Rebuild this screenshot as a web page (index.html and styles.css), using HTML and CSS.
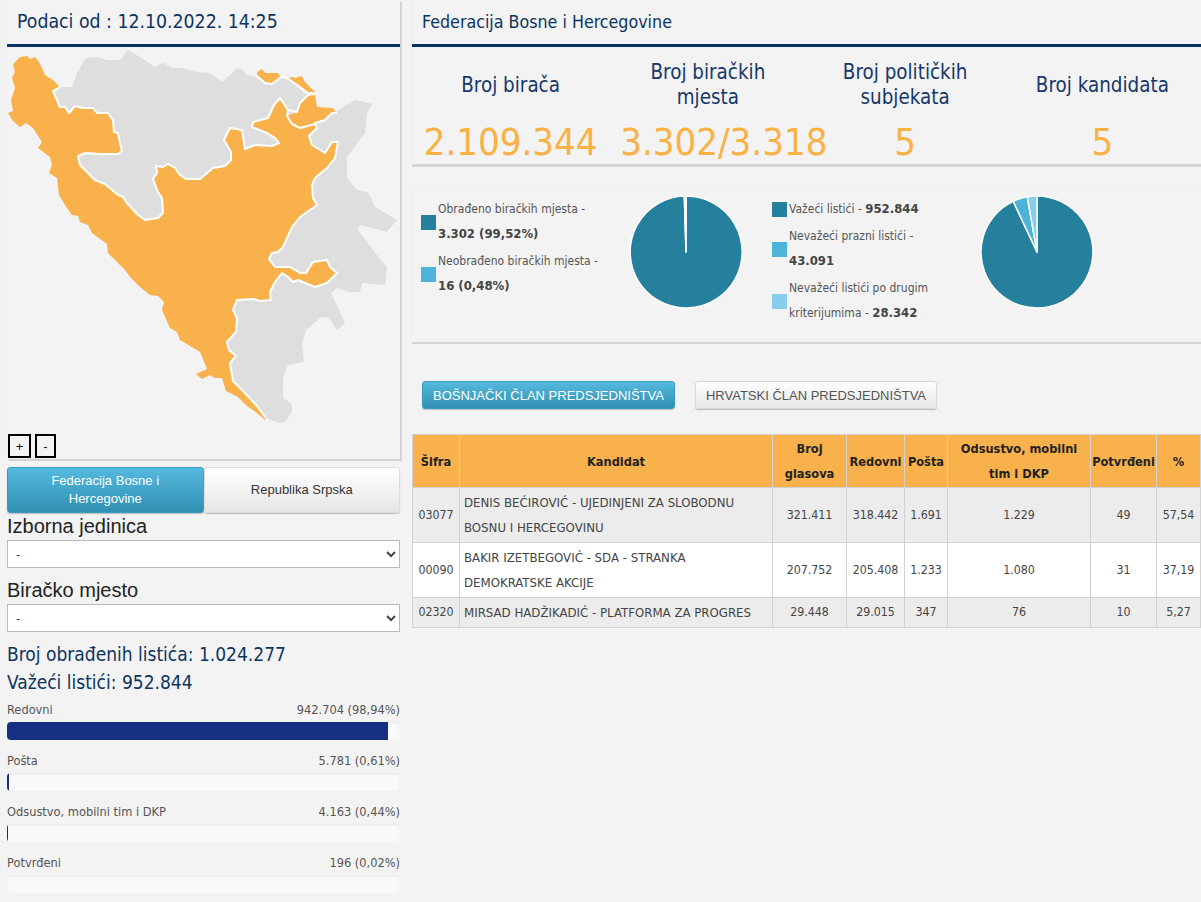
FILE: index.html
```html
<!DOCTYPE html>
<html lang="bs">
<head>
<meta charset="utf-8">
<title>Izbori</title>
<link rel="stylesheet" href="styles.css">
</head>
<body>
<div class="page">
  <aside class="left">
    <section class="panel map-panel">
      <h2 class="panel-head head-lg">Podaci od : 12.10.2022. 14:25</h2>
      <svg class="map" viewBox="7 47 393 387" width="393" height="387" aria-label="Mapa">
        <path class="land" d="M60 87L72 87 77 73 86 58 98 57 107 60 120 60 128 50 140 57 155 67 163 63 173 68 182 68 197 72 210 73 222 82 230 75 237 68 243 70 247 75 257 77 265 85 272 84 281 77 287 78 307 95 317 107 335 112 355 100 372 104 367 113 365 133 347 157 347 178 357 190 368 192 375 207 397 220 387 232 360 225 358 230 373 250 387 267 385 285 362 283 360 292 348 292 337 288 331 293 345 323 337 330 328 317 320 318 306 330 302 345 304 362 288 365 283 377 283 397 292 405 292 412 285 422 278 423 265 417 258 411 245 398 228 380 200 340 120 230 65 170 45 130 45 100Z"/>
        <path class="fed" d="M14 63L20 57 27 56 30 59 35 57 39 62 42 68 45 75 53 80 60 87 53 91 60 107 65 107 69 113 75 106 83 108 93 108 97 113 108 113 113 120 114 132 118 133 120 143 122 151 118 154 100 154 85 153 78 156 80 165 88 173 95 180 105 184 118 195 123 197 127 203 138 215 145 220 158 218 163 213 162 198 158 192 153 179 157 173 156 166 163 167 168 164 175 168 180 175 186 179 200 179 213 168 225 166 231 160 231 152 224 140 230 128 242 130 245 149 255 145 272 146 279 143 275 138 267 133 252 127 253 122 268 118 274 105 280 98 288 110 287 116 292 124 300 128 315 124 317 128 309 136 312 145 325 153 332 142 338 142 335 158 327 168 315 178 312 185 313 198 317 205 300 217 292 227 283 247 278 252 272 253 269 259 275 267 290 267 300 273 306 273 313 262 327 260 330 267 337 273 327 283 315 287 305 283 298 280 293 282 288 277 282 273 275 282 270 292 271 300 260 301 253 299 237 300 233 310 237 318 236 332 227 342 229 350 236 356 230 363 233 381 244 392 257 406 265 417 265 420 257 413 247 406 238 397 226 391 222 378 215 378 210 375 202 379 196 374 207 369 200 352 180 340 177 332 170 328 162 310 164 302 158 296 150 295 140 287 130 277 125 270 115 260 108 253 107 244 92 233 88 225 80 222 78 216 72 215 65 205 59 195 57 178 49 173 52 165 50 157 38 148 42 142 33 128 26 123 20 127 13 121 8 113 13 111 11 100 15 88 12 78 15 72 13 65Z"/>
        <path class="fed" d="M257 72L262 69 265 73 278 73 281 77 272 84 265 82 257 76Z"/>
        <path class="fed" d="M288 78L292 77 295 78 302 76 305 82 315 92 308 93 300 87Z"/>
        <path class="fed" d="M307 96L315 95 317 107 333 108 336 113 332 113 325 120 315 123 300 128 292 124 287 116 297 112 300 103Z"/>
        <polyline class="edge" points="60 87 53 91 60 107 65 107 69 113 75 106 83 108 93 108 97 113 108 113 113 120 114 132 118 133 120 143 122 151 118 154 100 154 85 153 78 156 80 165 88 173 95 180 105 184 118 195 123 197 127 203 138 215 145 220 158 218 163 213 162 198 158 192 153 179 157 173 156 166 163 167 168 164 175 168 180 175 186 179 200 179 213 168 225 166 231 160 231 152 224 140 230 128 242 130 245 149 255 145 272 146 279 143 275 138 267 133 252 127 253 122 268 118 274 105 280 98 288 110 287 116 292 124 300 128 315 124 317 128 309 136 312 145 325 153 332 142 338 142 335 158 327 168 315 178 312 185 313 198 317 205 300 217 292 227 283 247 278 252 272 253 269 259 275 267 290 267 300 273 306 273 313 262 327 260 330 267 337 273 327 283 315 287 305 283 298 280 293 282 288 277 282 273 275 282 270 292 271 300 260 301 253 299 237 300 233 310 237 318 236 332 227 342 229 350 236 356 230 363 233 381 244 392 257 406 265 417"/>
        <polyline class="edge" points="257 76 265 83 272 84 281 77 287 78 300 87 308 93 314 94"/>
        <polyline class="edge" points="288 110 297 112 300 103 307 96 311 93"/>
        <polyline class="edge" points="315 123 325 120 332 113 336 113"/>
      </svg>
      <div class="zoom-row">
        <button class="zoom-btn zoom-plus" type="button">+</button>
        <button class="zoom-btn zoom-minus" type="button">-</button>
      </div>
    </section>

    <div class="entity-tabs">
      <button class="entity active" type="button">Federacija Bosne i Hercegovine</button>
      <button class="entity" type="button">Republika Srpska</button>
    </div>

    <label class="field-label">Izborna jedinica</label>
    <select class="field"><option>-</option></select>
    <label class="field-label second">Biračko mjesto</label>
    <select class="field"><option>-</option></select>

    <p class="total first">Broj obrađenih listića: 1.024.277</p>
    <p class="total">Važeći listići: 952.844</p>

    <div class="bar-row"><span>Redovni</span><span>942.704 (98,94%)</span></div>
    <div class="track"><div class="fill" style="width:381px"></div></div>
    <div class="bar-row"><span>Pošta</span><span>5.781 (0,61%)</span></div>
    <div class="track"><div class="fill" style="width:2px"></div></div>
    <div class="bar-row"><span>Odsustvo, mobilni tim i DKP</span><span>4.163 (0,44%)</span></div>
    <div class="track"><div class="fill" style="width:1px"></div></div>
    <div class="bar-row"><span>Potvrđeni</span><span>196 (0,02%)</span></div>
    <div class="track"><div class="fill" style="width:0"></div></div>
  </aside>

  <main class="right">
    <section class="panel stats-panel">
      <h2 class="panel-head head-sm">Federacija Bosne i Hercegovine</h2>
      <div class="stats">
        <div class="stat"><div class="stat-title">Broj birača</div><div class="stat-value">2.109.344</div></div>
        <div class="stat"><div class="stat-title">Broj biračkih<br>mjesta</div><div class="stat-value">3.302/3.318</div></div>
        <div class="stat"><div class="stat-title">Broj političkih<br>subjekata</div><div class="stat-value">5</div></div>
        <div class="stat"><div class="stat-title">Broj kandidata</div><div class="stat-value">5</div></div>
      </div>
    </section>

    <section class="panel charts">
      <div class="chart">
        <ul class="legend">
          <li><i class="sw c1"></i><span>Obrađeno biračkih mjesta -<br><b>3.302 (99,52%)</b></span></li>
          <li><i class="sw c2"></i><span>Neobrađeno biračkih mjesta -<br><b>16 (0,48%)</b></span></li>
        </ul>
        <svg class="pie" viewBox="0 0 116 116" width="116" height="116">
          <path class="s1" d="M58 58L58 2A56 56 0 1 1 56.31 2.03Z"/>
          <path class="s2" d="M58 58L56.31 2.03A56 56 0 0 1 58 2Z"/>
        </svg>
      </div>
      <div class="chart">
        <ul class="legend">
          <li><i class="sw c1"></i><span>Važeći listići - <b>952.844</b></span></li>
          <li><i class="sw c2"></i><span>Nevažeći prazni listići -<br><b>43.091</b></span></li>
          <li><i class="sw c3"></i><span>Nevažeći listići po drugim<br>kriterijumima - <b>28.342</b></span></li>
        </ul>
        <svg class="pie" viewBox="0 0 116 116" width="116" height="116">
          <path class="s1" d="M58 58L58 2A56 56 0 1 1 34.24 7.29Z"/>
          <path class="s2" d="M58 58L34.24 7.29A56 56 0 0 1 48.31 2.85Z"/>
          <path class="s3" d="M58 58L48.31 2.85A56 56 0 0 1 58 2Z"/>
        </svg>
      </div>
    </section>

    <div class="race-tabs">
      <button class="race active" type="button">BOŠNJAČKI ČLAN PREDSJEDNIŠTVA</button>
      <button class="race" type="button">HRVATSKI ČLAN PREDSJEDNIŠTVA</button>
    </div>

    <table class="results">
      <colgroup>
        <col class="w1"><col class="w2"><col class="w3"><col class="w4"><col class="w5"><col class="w6"><col class="w7"><col class="w8">
      </colgroup>
      <thead>
        <tr><th>Šifra</th><th>Kandidat</th><th>Broj<br>glasova</th><th>Redovni</th><th>Pošta</th><th>Odsustvo, mobilni<br>tim i DKP</th><th>Potvrđeni</th><th>%</th></tr>
      </thead>
      <tbody>
        <tr class="odd"><td>03077</td><td class="name">DENIS BEĆIROVIĆ - UJEDINJENI ZA SLOBODNU<br>BOSNU I HERCEGOVINU</td><td>321.411</td><td>318.442</td><td>1.691</td><td>1.229</td><td>49</td><td>57,54</td></tr>
        <tr><td>00090</td><td class="name">BAKIR IZETBEGOVIĆ - SDA - STRANKA<br>DEMOKRATSKE AKCIJE</td><td>207.752</td><td>205.408</td><td>1.233</td><td>1.080</td><td>31</td><td>37,19</td></tr>
        <tr class="odd"><td>02320</td><td class="name">MIRSAD HADŽIKADIĆ - PLATFORMA ZA PROGRES</td><td>29.448</td><td>29.015</td><td>347</td><td>76</td><td>10</td><td>5,27</td></tr>
      </tbody>
    </table>
  </main>
</div>
</body>
</html>
```

FILE: styles.css
```css
* { box-sizing: border-box; }
html, body { margin: 0; padding: 0; }
body {
  background: #f3f3f3;
  color: #444;
  font-family: "DejaVu Sans Condensed", "DejaVu Sans", sans-serif;
  font-stretch: condensed;
  overflow: hidden;
}
.page {
  display: grid;
  grid-template-columns: 393px 789px;
  column-gap: 12px;
  padding-left: 7px;
  height: 902px;
  overflow: hidden;
}
.panel {
  background: #f3f3f3;
  box-shadow: 0 0 1px #ddd;
}
.panel-head {
  margin: 0;
  height: 47px;
  border-bottom: 3px solid #0b3361;
  color: #0d3361;
  font-weight: 400;
}
.head-lg { font-size: 19.3px; line-height: 44px; padding-left: 10px; }
.head-sm { font-size: 17.7px; line-height: 44px; padding-left: 10px; }

.map-panel { height: 459px; box-shadow: 2px 2px 0 #d4d4d4, 0 0 1px #ddd; }
.map { display: block; }
.land { fill: #dedede; }
.fed { fill: #f9b14b; }
.edge { fill: none; stroke: #fff; stroke-width: 2; stroke-linejoin: round; stroke-linecap: round; }
.zoom-row { display: flex; gap: 4px; padding-left: 1px; }
.zoom-btn {
  height: 24px;
  padding: 0;
  background: #f3f3f3;
  border: 2px solid #000;
  border-radius: 0;
  color: #111;
  font: 13px "Liberation Sans", sans-serif;
}
.zoom-plus { width: 23px; }
.zoom-minus { width: 21px; }

.entity-tabs { display: flex; margin-top: 8px; height: 46px; }
.entity {
  flex: 1;
  padding: 0 20px;
  border: 1px solid #dcdcdc;
  border-radius: 3px;
  background: linear-gradient(#fff, #e6e6e6);
  color: #333;
  font: 13px/18px "Liberation Sans", sans-serif;
  box-shadow: 0 1px 1px #bbb;
}
.entity.active {
  background: linear-gradient(#55bade, #3090b2);
  border-color: #3a9dbf;
  color: #fff;
}
.field-label {
  display: block;
  color: #222;
  font: 20px/27px "Liberation Sans", sans-serif;
}
.field-label.second { margin-top: 8px; line-height: 28px; }
.field {
  display: block;
  width: 393px;
  height: 28px;
  background: #fff;
  border: 1px solid #bbb;
  color: #444;
  font: 13px "Liberation Sans", sans-serif;
  padding: 0 4px;
}
.total {
  margin: 0;
  color: #0d3361;
  font-size: 19px;
  line-height: 28px;
}
.total.first { margin-top: 8px; }
.bar-row {
  display: flex;
  justify-content: space-between;
  height: 26px;
  padding-top: 1px;
  color: #555;
  font-size: 12.7px;
  line-height: 26px;
}
.track {
  height: 18px;
  margin-bottom: 7px;
  background: #f9f9f9;
  border-radius: 4px;
  box-shadow: inset 0 1px 2px #e6e6e6;
  overflow: hidden;
}
.fill { height: 100%; background: #162f82; }

.stats-panel { height: 164px; box-shadow: 0 3px 0 #d4d4d4, 0 0 1px #ddd; }
.stats { display: grid; grid-template-columns: repeat(4, minmax(0, 1fr)); }
.stat { min-width: 0; padding: 0 11px; text-align: center; }
.stat-title {
  display: flex;
  align-items: center;
  justify-content: center;
  height: 50px;
  margin-top: 13px;
  color: #16386a;
  font-size: 20.4px;
  line-height: 25px;
  text-align: center;
}
.stat-value {
  padding-top: 5px;
  color: #fbb144;
  font-size: 38px;
  line-height: 54px;
  white-space: nowrap;
}

.charts {
  display: flex;
  height: 156px;
  margin-top: 22px;
  padding-top: 8px;
  box-shadow: 0 2px 0 #d4d4d4, 0 0 1px #ddd;
}
.chart { display: flex; width: 351px; padding-left: 9px; }
.legend {
  width: 207px;
  margin: 3px 0 0;
  padding: 0;
  list-style: none;
  color: #555;
  font-size: 12px;
  line-height: 25px;
}
.legend li { display: flex; align-items: center; gap: 2px; margin-bottom: 2px; }
.legend b { color: #444; font-size: 13px; line-height: 1; }
.sw { width: 15px; height: 15px; flex: none; }
.c1 { background: #25809e; }
.c2 { background: #4cb4d8; }
.c3 { background: #87cdec; }
.pie { display: block; flex: none; }
.s1, .s2, .s3 { stroke: #fff; stroke-width: 1.5; stroke-linejoin: round; }
.s1 { fill: #25809e; }
.s2 { fill: #4cb4d8; }
.s3 { fill: #87cdec; }

.race-tabs { display: flex; gap: 20px; margin-top: 39px; padding-left: 10px; }
.race {
  height: 28px;
  padding: 0 10px;
  border: 1px solid #d8d8d8;
  border-radius: 3px;
  background: linear-gradient(#fff, #e6e6e6);
  color: #555;
  font: 13px "Liberation Sans", sans-serif;
  box-shadow: 0 1px 1px #bbb;
  white-space: nowrap;
}
.race.active {
  background: linear-gradient(#55bade, #3090b2);
  border-color: #3a9dbf;
  color: #fff;
}

.results {
  width: 788px;
  margin-top: 25px;
  table-layout: fixed;
  border-collapse: collapse;
  background: #fff;
  font-size: 12.3px;
  line-height: 25px;
  color: #444;
}
.w1 { width: 47px; } .w2 { width: 313px; } .w3 { width: 74px; } .w4 { width: 58px; }
.w5 { width: 43px; } .w6 { width: 143px; } .w7 { width: 66px; } .w8 { width: 44px; }
.results th, .results td { border: 1px solid #d2d2d2; padding: 2px 1px; text-align: center; font-weight: 400; white-space: nowrap; }
.results th { background: #f9b14b; color: #222; font-size: 12.7px; font-weight: 700; padding: 1px 0; }
.results td.name { text-align: left; padding: 2px 4px; font-size: 13.1px; }
.results .odd td { background: #ececec; }
```
